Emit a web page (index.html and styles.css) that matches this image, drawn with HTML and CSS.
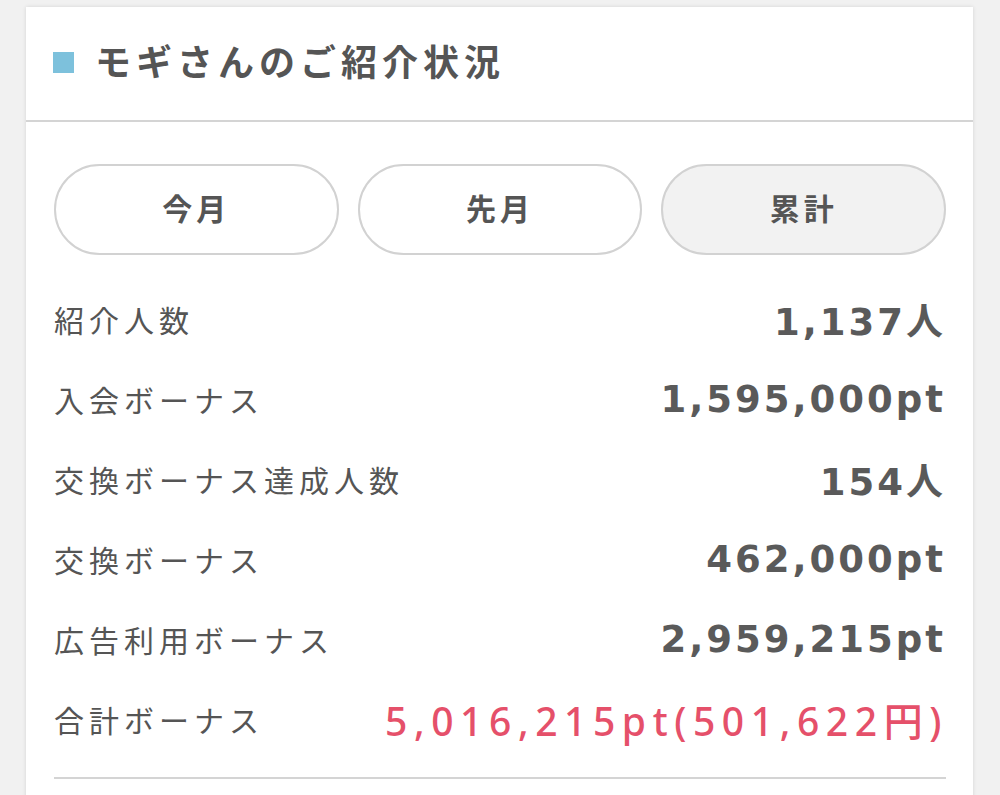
FILE: index.html
```html
<!DOCTYPE html>
<html lang="ja">
<head>
  <meta charset="utf-8">
  <title>ご紹介状況</title>
  <link rel="stylesheet" href="styles.css">
</head>
<body>
  <div class="card">
    <div class="card-head">
      <span class="mark"></span>
      <h2>モギさんのご紹介状況</h2>
    </div>

    <div class="card-body">
      <div class="tabs">
        <button class="tab">今月</button>
        <button class="tab">先月</button>
        <button class="tab active">累計</button>
      </div>

      <div class="stats">
        <div class="row">
          <div class="label">紹介人数</div>
          <div class="value">1,137人</div>
        </div>
        <div class="row">
          <div class="label">入会ボーナス</div>
          <div class="value">1,595,000pt</div>
        </div>
        <div class="row">
          <div class="label">交換ボーナス達成人数</div>
          <div class="value">154人</div>
        </div>
        <div class="row">
          <div class="label">交換ボーナス</div>
          <div class="value">462,000pt</div>
        </div>
        <div class="row">
          <div class="label">広告利用ボーナス</div>
          <div class="value">2,959,215pt</div>
        </div>
        <div class="row">
          <div class="label">合計ボーナス</div>
          <div class="value total">5,016,215pt(501,622円)</div>
        </div>
      </div>

      <div class="divider"></div>
    </div>
  </div>
</body>
</html>
```

FILE: styles.css
```css
/* ご紹介状況カード */
body {
  margin: 0;
  padding: 7px 27px 0 26px;
  background-color: #f1f1f1;
  font-family: "Noto Sans CJK JP", "Noto Sans", sans-serif;
  color: #555;
}

.card {
  background-color: #fff;
  box-shadow: 0 0 4px rgba(0, 0, 0, 0.12);
  min-height: 800px;
}

.card-head {
  display: flex;
  align-items: center;
  height: 113px;
  padding-left: 27px;
  border-bottom: 2px solid #d4d4d4;
}

.card-head .mark {
  width: 21px;
  height: 21px;
  background-color: #7dc1dc;
  margin-right: 21px;
  margin-top: -2px;
}

.card-head h2 {
  margin: 0 0 8px;
  font-size: 36px;
  font-weight: bold;
  letter-spacing: 5px;
  color: #555;
}

.card-body {
  padding: 42px 27px 0 28px;
}

.tabs {
  display: grid;
  grid-template-columns: 1fr 1fr 1fr;
  gap: 19px;
}

.tab {
  height: 91px;
  padding-bottom: 7px;
  border: 2px solid #d2d2d2;
  border-radius: 46px;
  background-color: #fff;
  font-family: inherit;
  font-size: 30px;
  font-weight: bold;
  letter-spacing: 4px;
  color: #555;
}

.tab.active {
  background-color: #f2f2f2;
}

.stats {
  margin-top: 24px;
}

.row {
  display: flex;
  justify-content: space-between;
  align-items: center;
  height: 80px;
}

.row .label {
  font-size: 30px;
  letter-spacing: 5px;
}

.row .value {
  font-family: "DejaVu Sans", "Noto Sans CJK JP", sans-serif;
  font-size: 37px;
  font-weight: bold;
  letter-spacing: 3px;
  color: #5a5a5a;
}

.row .value.total {
  font-family: "Noto Sans", "Noto Sans CJK JP", sans-serif;
  font-weight: 500;
  font-size: 39px;
  letter-spacing: 6.6px;
  margin-right: -2px;
  color: #e5506a;
}

.divider {
  margin-top: 18px;
  border-top: 2px solid #d4d4d4;
}
```
